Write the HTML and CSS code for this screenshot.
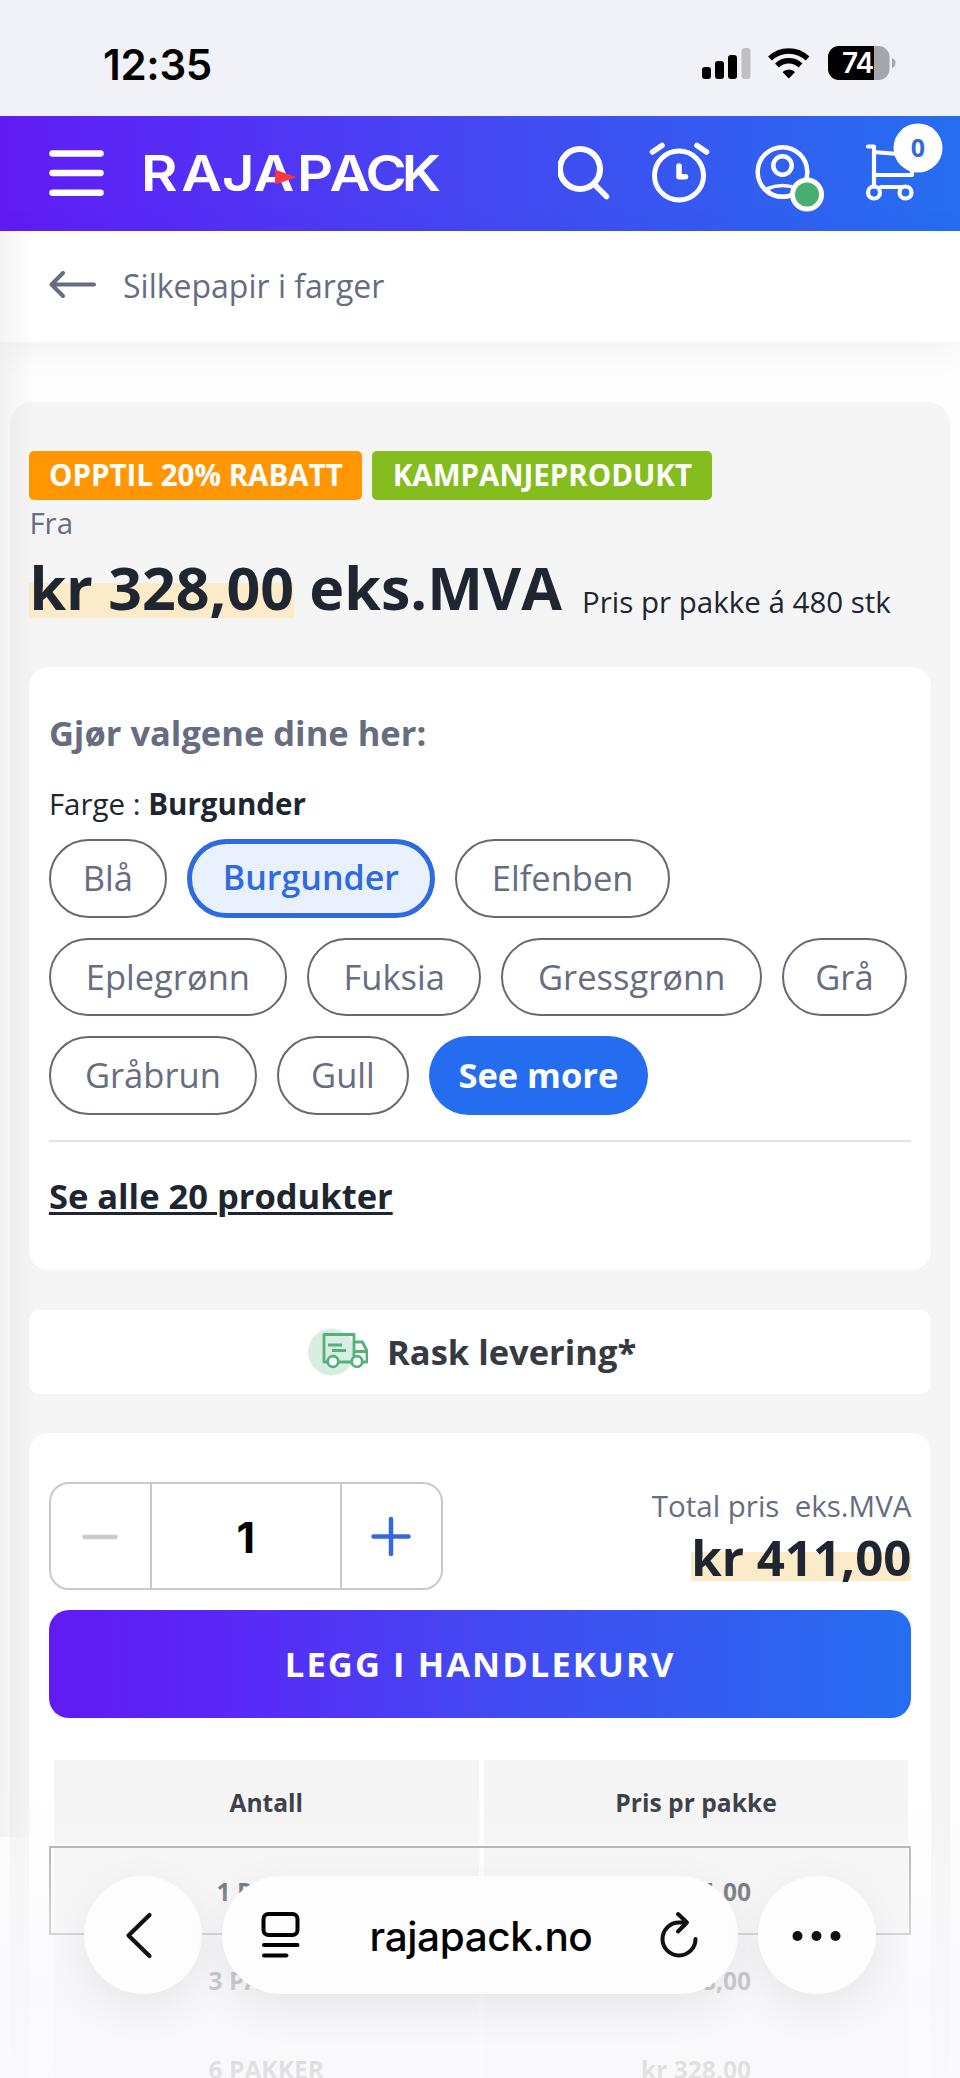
FILE: index.html
```html
<!DOCTYPE html>
<html lang="no">
<head>
<meta charset="utf-8">
<title>Silkepapir i farger</title>
<link rel="stylesheet" href="styles.css">
</head>
<body>
<div class="screen">
  <div class="status">
    <div class="clock">12:35</div>
    <svg class="status-icons" width="196" height="36" viewBox="0 0 196 36">
      <rect x="2" y="21" width="9" height="12" rx="3"/>
      <rect x="15" y="15" width="9" height="18" rx="3"/>
      <rect x="28" y="9" width="9" height="24" rx="3"/>
      <rect x="41.500" y="2" width="9" height="31" rx="3" fill="#bfc0c5"/>
      <g fill="none" stroke="#000" stroke-width="5.600">
        <path d="M70 12.500a27 27 0 0 1 37.500 0"/>
        <path d="M77 19.500a17 17 0 0 1 23.500 0"/>
      </g>
      <path d="M88.800 32.500l-6.300-6.500a9 9 0 0 1 12.600 0z"/>
      <path d="M139 0h35v34h-35a11 11 0 0 1-11-11V11a11 11 0 0 1 11-11z"/>
      <path d="M174 0h4.500a11 11 0 0 1 11 11v12a11 11 0 0 1-11 11H174z" fill="#a5a6ab"/>
      <path d="M192 12q3.500 1.500 3.500 5t-3.500 5z" fill="#a5a6ab"/>
      <text class="battery" x="157.500" y="27" text-anchor="middle">74</text>
    </svg>
  </div>

  <header class="header">
    <svg class="menu" width="55" height="47" viewBox="0 0 55 47" stroke="#fff" stroke-width="6.500" stroke-linecap="round"><path d="M3.500 3.500h48M3.500 23h48M3.500 42.700h48"/></svg>
    <svg class="logo" width="310" height="84" viewBox="-5 -20 310 84">
      <g transform="scale(1.120 1)"><text class="wordmark" x="-1 35 71.500 99.500 138.400 167.500 199.500 232" y="40">RAJAPACK</text></g>
      <path d="M133 18.500l21.500 7.700-21.500 7.300z" fill="#fb3640"/>
    </svg>
    <svg class="actions" width="392" height="100" viewBox="0 0 392 100" fill="none" stroke="#fff" stroke-width="5.500" stroke-linecap="round" stroke-linejoin="round">
      <circle cx="22" cy="49" r="20" stroke-width="6"/><path d="M37 65l11.500 11.500"/>
      <circle cx="121" cy="55.500" r="24.500" stroke-width="5"/><path d="M121 46v10.700h6.500M94.500 32l9.500-6.500M139 25.500l9.500 6.500" stroke-width="5.500"/>
      <circle cx="224.500" cy="52" r="24.800" stroke-width="4.500"/><circle cx="224.500" cy="45.500" r="9.200" stroke-width="4.500"/><path d="M208.500 69q16-7 32 0l-5 5q-11 5-22 0z" stroke-width="3.600"/>
      <circle cx="249" cy="74.500" r="14.500" fill="#47ae72" stroke-width="5"/>
      <g stroke-width="4.200"><path d="M310 26.500h6v40M316 32l24 2M316 55h38v-8M323 67h20"/><circle cx="316" cy="72.500" r="6"/><circle cx="347.500" cy="72.500" r="6"/></g>
      <circle cx="360" cy="28" r="24.500" fill="#fff" stroke="none"/>
      <text class="count" x="360" y="37" text-anchor="middle">0</text>
    </svg>
  </header>

  <nav class="crumb">
    <svg width="48" height="28" viewBox="0 0 48 28" fill="none" stroke="#666d82" stroke-width="4" stroke-linecap="round" stroke-linejoin="round"><path d="M45 13.500H3M14 2L2.500 13.500 14 25"/></svg>
    <span>Silkepapir i farger</span>
  </nav>

  <main class="product">
    <div class="badges"><span class="badge sale">OPPTIL 20% RABATT</span><span class="badge campaign">KAMPANJEPRODUKT</span></div>
    <div class="from">Fra</div>
    <div class="price-row"><div class="price"><span class="mark">kr 328,00</span> eks.MVA</div><div class="unit">Pris pr pakke á 480 stk</div></div>

    <section class="card choices">
      <h2>Gjør valgene dine her:</h2>
      <p class="attribute">Farge : <b>Burgunder</b></p>
      <div class="chips">
        <span class="chip w1">Blå</span><span class="chip selected w2">Burgunder</span><span class="chip w3">Elfenben</span>
      </div>
      <div class="chips">
        <span class="chip w4">Eplegrønn</span><span class="chip w5">Fuksia</span><span class="chip w6">Gressgrønn</span><span class="chip w7">Grå</span>
      </div>
      <div class="chips">
        <span class="chip w8">Gråbrun</span><span class="chip w9">Gull</span><span class="chip more">See more</span>
      </div>
      <hr>
      <a class="all">Se alle 20 produkter</a>
    </section>

    <section class="card delivery">
      <svg width="60" height="48" viewBox="0 0 60 48" fill="none" stroke="#55b17b" stroke-width="2.800" stroke-linejoin="round">
        <circle cx="23.500" cy="24" r="23.500" fill="#d9eee1" stroke="none"/>
        <path d="M19 34h-3V6.500h30V34H31M46 14h8.500l4.500 9v11h-4M46 23.500h12M20 17h14M24 22.500h14"/>
        <circle cx="25" cy="33.500" r="5.300" fill="#fff"/><circle cx="49" cy="33.500" r="5.300" fill="#fff"/>
      </svg>
      <span>Rask levering*</span>
    </section>

    <section class="card buy">
      <div class="order">
        <div class="stepper">
          <span class="step minus"><svg width="40" height="42" viewBox="0 0 40 42" stroke="#cbcbcd" stroke-width="4.500" stroke-linecap="round"><path d="M4.500 22h31"/></svg></span>
          <span class="qty">1</span>
          <span class="step plus"><svg width="42" height="42" viewBox="0 0 42 42" stroke="#346ad8" stroke-width="4.500" stroke-linecap="round"><path d="M3.500 21.500h35M21 4v35"/></svg></span>
        </div>
        <div class="total"><div class="total-label">Total pris&nbsp; eks.MVA</div><div class="total-price mark">kr 411,00</div></div>
      </div>
      <div class="add">LEGG I HANDLEKURV</div>
      <div class="tiers">
        <div class="tier head"><span>Antall</span><span>Pris pr pakke</span></div>
        <div class="tier active"><span>1 PAKKE</span><span>kr 411,00</span></div>
        <div class="tier"><span>3 PAKKER</span><span>kr 368,00</span></div>
        <div class="tier"><span>6 PAKKER</span><span>kr 328,00</span></div>
      </div>
    </section>
  </main>

  <div class="edge-shadow"></div>
  <div class="fade"></div>
  <div class="toolbar">
    <div class="round"><svg width="118" height="118" viewBox="0 0 118 118" fill="none" stroke="#111" stroke-width="4.200" stroke-linecap="round" stroke-linejoin="round"><path d="M65.500 39L44.500 59.500 65.500 80"/></svg></div>
    <div class="address">
      <svg width="40" height="46" viewBox="0 0 40 46" fill="none" stroke="#000" stroke-width="4" stroke-linecap="round"><rect x="3.500" y="2" width="34" height="21" rx="5"/><path d="M4 33h33.500M4 43.500h22.500"/></svg>
      <span class="url">rajapack.no</span>
      <svg class="reload" width="40" height="48" viewBox="0 0 40 48" fill="none" stroke="#111" stroke-width="4" stroke-linecap="round" stroke-linejoin="round"><path d="M36.500 28A16.500 16.500 0 1 1 20 11.500h7M19 3l9 8.500-9 9"/></svg>
    </div>
    <div class="round"><svg width="118" height="118" viewBox="0 0 118 118" fill="#111"><circle cx="39.500" cy="60" r="5"/><circle cx="58.500" cy="60" r="5"/><circle cx="77.500" cy="60" r="5"/></svg></div>
  </div>
</div>
</body>
</html>
```
FILE: styles.css
```css
* { box-sizing: border-box; }
body { margin: 0; background: #fff; font-family: "Open Sans", sans-serif; color: #202631; }
svg { display: block; flex: none; }
.screen { position: relative; width: 960px; height: 2078px; overflow: hidden; background: #fdfdfd; }

.status { height: 116px; background: #f1f2f8; display: flex; justify-content: space-between; padding: 46px 64px 0 103px; color: #000; }
.clock { font: 600 42px/37px Inter, sans-serif; letter-spacing: -0.300px; }
.battery { font: 600 28px Inter, sans-serif; fill: #fff; letter-spacing: -1px; }

.header { height: 115px; display: flex; align-items: flex-start; background: linear-gradient(90deg, #601bf2 0, #5a27f7 12%, #4448f2 50%, #256ef0 100%); }
.menu { margin: 34px 0 0 49px; }
.logo { margin: 15px 0 0 33px; }
.wordmark { font: 600 50px Inter, sans-serif; fill: #fff; }
.actions { margin: 4px 0 0 111px; }
.count { font: 700 25px "Open Sans", sans-serif; fill: #346ad8; stroke: none; }

.crumb { height: 111px; display: flex; align-items: center; gap: 26px; padding: 0 0 3px 49px; background: #fff; color: #666d82; font-size: 32px; line-height: 40px; box-shadow: 0 6px 36px rgba(0,0,0,.05); }
.crumb span { padding-top: 2px; }

.product { margin: 60px 10px 0; height: 1700px; padding: 48.500px 19.400px 0; border-radius: 22px; background: #f5f5f5; }
.badges { display: flex; gap: 10px; }
.badge { height: 49px; border-radius: 5px; color: #fff; font-size: 29.500px; font-weight: 700; line-height: 47px; text-align: center; white-space: nowrap; }
.sale { width: 333px; background: #ff9602; }
.campaign { width: 340px; background: #85bd1e; }
.from { height: 54px; font-size: 29.500px; line-height: 46px; color: #666d82; }
.price-row { display: flex; gap: 20px; height: 113px; white-space: nowrap; }
.price { font-size: 59.100px; font-weight: 700; line-height: 66px; }
.mark { background: linear-gradient(#fbebc8, #fbebc8) no-repeat 0 36px / 100% 35px; }
.unit { font-size: 29.500px; line-height: 40px; padding-top: 28px; }

.card { background: #fff; border-radius: 20px; width: 901.500px; }
.choices { height: 603px; padding: 41px 19.500px 0; }
h2 { margin: 0; font-size: 34.500px; font-weight: 700; line-height: 50px; color: #666d82; }
.attribute { margin: 26px 0 15.500px; font-size: 29.500px; line-height: 40px; }
.attribute b { font-weight: 700; }
.chips { display: flex; gap: 20px; margin-bottom: 20px; }
.chip { flex: none; height: 78.500px; border: 2px solid #666874; border-radius: 40px; color: #666d82; font-size: 34.500px; line-height: 73px; text-align: center; white-space: nowrap; }
.w1 { width: 118px; } .w2 { width: 248px; } .w3 { width: 215.500px; }
.w4 { width: 238px; } .w5 { width: 174.500px; } .w6 { width: 260.500px; } .w7 { width: 125px; }
.w8 { width: 208px; } .w9 { width: 132px; }
.selected { border: 5px solid #2e6ae0; background: #e9f0fe; color: #2e6ae0; line-height: 66px; font-weight: 600; font-size: 34px; }
.more { width: 219px; border: 0; background: #246df0; color: #fff; font-weight: 700; line-height: 77px; }
hr { margin: 25px 0 29px; border: 0; height: 2px; background: #dfe2ea; }
.all { font-size: 34.500px; font-weight: 700; line-height: 50px; display: inline-block; text-decoration: underline; text-decoration-thickness: 2.500px; text-underline-offset: 3px; }

.delivery { height: 84px; margin-top: 40px; border-radius: 10px; display: flex; align-items: center; justify-content: center; gap: 19px; padding-right: 16px; font-size: 34.500px; font-weight: 700; line-height: 50px; color: #363a43; }

.buy { margin-top: 39px; height: 700px; padding: 49px 19.500px 0; }
.order { display: flex; justify-content: space-between; height: 108px; }
.stepper { width: 394px; height: 108px; border: 2px solid #c9c9cb; border-radius: 20px; display: flex; }
.step { display: flex; align-items: center; justify-content: center; }
.minus { width: 99px; }
.plus { width: 99px; }
.qty { flex: 1; border: solid #c9c9cb; border-width: 0 2px; text-align: center; font: 700 43px/106px Inter, sans-serif; color: #000; }
.total { display: flex; flex-direction: column; align-items: flex-end; white-space: nowrap; }
.total-label { font-size: 29.500px; line-height: 40px; padding-top: 4px; color: #666d82; }
.total-price { font-size: 49.200px; font-weight: 700; line-height: 60px; background-position: 0 25px; background-size: 100% 29px; margin-top: 1px; }
.add { height: 108px; margin-top: 20px; border-radius: 20px; background: linear-gradient(90deg, #601bf2 0, #5a27f7 20%, #4448f2 50%, #256ef0 100%); color: #fff; font-size: 34.500px; font-weight: 700; letter-spacing: 2.100px; line-height: 107px; text-align: center; }
.tiers { margin-top: 42px; font-size: 24.600px; font-weight: 700; color: #31353e; }
.tier { height: 89px; display: flex; gap: 5px; padding: 0 3px 0 5px; text-align: center; line-height: 92px; }
.tier span { flex: 1; background: #f5f5f5; }
.head { height: 86px; padding-bottom: 2px; line-height: 86px; }
.active { padding: 0 1px 0 3px; border: 2px solid #a8a8ad; }
.active span { line-height: 87px; }

.edge-shadow { position: absolute; left: 0; top: 231px; width: 36px; height: 1606px; background: linear-gradient(90deg, rgba(0,0,0,.045), rgba(0,0,0,0)); }
.fade { position: absolute; left: 0; top: 1780px; width: 960px; height: 298px; background: linear-gradient(rgba(249,249,252,0) 0, rgba(249,249,252,.18) 22%, rgba(249,249,252,.4) 38%, rgba(249,249,252,.76) 66%, rgba(250,250,252,.88) 100%); }
.toolbar { position: absolute; left: 84px; top: 1876px; display: flex; gap: 20px; }
.round, .address { height: 118px; border-radius: 59px; background: #fdfdfe; box-shadow: 0 14px 46px rgba(0,0,0,.07); }
.round { width: 118px; }
.address { width: 516px; display: flex; align-items: center; padding: 0 39px 0 38px; }
.url { flex: 1; padding: 3px 0 0 3px; text-align: center; font: 500 40.500px/50px Inter, sans-serif; color: #000; letter-spacing: -0.400px; }
```
